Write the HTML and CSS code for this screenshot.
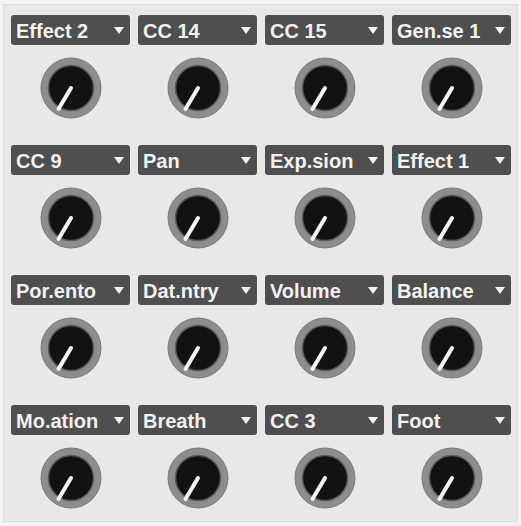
FILE: index.html
```html
<!DOCTYPE html>
<html>
<head>
<meta charset="utf-8">
<link rel="stylesheet" href="styles.css">
</head>
<body>
<svg width="0" height="0" class="defs">
  <defs>
    <g id="knob">
      <circle r="30" fill="#8d8d8d" stroke="#7a7a7a" stroke-width="1"/>
      <circle r="22.5" fill="#121212" stroke="#5a5a5a" stroke-width="1.5"/>
      <line x1="0" y1="0" x2="-12.5" y2="21" stroke="#f4f4f4" stroke-width="4" stroke-linecap="round"/>
    </g>
  </defs>
</svg>
<div class="panel">
  <div class="grid">
    <div class="cell"><div class="menu"><span class="label">Effect 2</span><span class="arrow"></span></div><svg class="knob" viewBox="-31 -31 62 62"><use href="#knob"/></svg></div>
    <div class="cell"><div class="menu"><span class="label">CC 14</span><span class="arrow"></span></div><svg class="knob" viewBox="-31 -31 62 62"><use href="#knob"/></svg></div>
    <div class="cell"><div class="menu"><span class="label">CC 15</span><span class="arrow"></span></div><svg class="knob" viewBox="-31 -31 62 62"><use href="#knob"/></svg></div>
    <div class="cell"><div class="menu"><span class="label">Gen.se 1</span><span class="arrow"></span></div><svg class="knob" viewBox="-31 -31 62 62"><use href="#knob"/></svg></div>

    <div class="cell"><div class="menu"><span class="label">CC 9</span><span class="arrow"></span></div><svg class="knob" viewBox="-31 -31 62 62"><use href="#knob"/></svg></div>
    <div class="cell"><div class="menu"><span class="label">Pan</span><span class="arrow"></span></div><svg class="knob" viewBox="-31 -31 62 62"><use href="#knob"/></svg></div>
    <div class="cell"><div class="menu"><span class="label">Exp.sion</span><span class="arrow"></span></div><svg class="knob" viewBox="-31 -31 62 62"><use href="#knob"/></svg></div>
    <div class="cell"><div class="menu"><span class="label">Effect 1</span><span class="arrow"></span></div><svg class="knob" viewBox="-31 -31 62 62"><use href="#knob"/></svg></div>

    <div class="cell"><div class="menu"><span class="label">Por.ento</span><span class="arrow"></span></div><svg class="knob" viewBox="-31 -31 62 62"><use href="#knob"/></svg></div>
    <div class="cell"><div class="menu"><span class="label">Dat.ntry</span><span class="arrow"></span></div><svg class="knob" viewBox="-31 -31 62 62"><use href="#knob"/></svg></div>
    <div class="cell"><div class="menu"><span class="label">Volume</span><span class="arrow"></span></div><svg class="knob" viewBox="-31 -31 62 62"><use href="#knob"/></svg></div>
    <div class="cell"><div class="menu"><span class="label">Balance</span><span class="arrow"></span></div><svg class="knob" viewBox="-31 -31 62 62"><use href="#knob"/></svg></div>

    <div class="cell"><div class="menu"><span class="label">Mo.ation</span><span class="arrow"></span></div><svg class="knob" viewBox="-31 -31 62 62"><use href="#knob"/></svg></div>
    <div class="cell"><div class="menu"><span class="label">Breath</span><span class="arrow"></span></div><svg class="knob" viewBox="-31 -31 62 62"><use href="#knob"/></svg></div>
    <div class="cell"><div class="menu"><span class="label">CC 3</span><span class="arrow"></span></div><svg class="knob" viewBox="-31 -31 62 62"><use href="#knob"/></svg></div>
    <div class="cell"><div class="menu"><span class="label">Foot</span><span class="arrow"></span></div><svg class="knob" viewBox="-31 -31 62 62"><use href="#knob"/></svg></div>
  </div>
</div>
</body>
</html>
```

FILE: styles.css
```css
html, body {
  margin: 0;
  padding: 0;
  background: #f3f3f3;
}
.defs {
  position: absolute;
  width: 0;
  height: 0;
}
.panel {
  box-sizing: border-box;
  width: 515px;
  height: 518px;
  margin: 4px 0 0 3px;
  background: #e8e8e8;
  border: 1px solid #dcdcdc;
  padding: 10px 0 0 7px;
}
.grid {
  display: grid;
  grid-template-columns: repeat(4, 119px);
  column-gap: 8px;
  row-gap: 26px;
  width: 500px;
}
.cell {
  display: flex;
  flex-direction: column;
  align-items: center;
  gap: 12px;
}
.menu {
  box-sizing: border-box;
  width: 100%;
  height: 30px;
  background: #4f4f4f;
  border-radius: 3px;
  display: flex;
  align-items: center;
  justify-content: space-between;
  padding: 2px 6px 0 5px;
}
.label {
  font-family: "Liberation Sans", Arial, sans-serif;
  font-weight: bold;
  font-size: 20px;
  line-height: 24px;
  color: #f2f2f2;
  white-space: nowrap;
}
.arrow {
  width: 0;
  height: 0;
  margin-top: -2px;
  border-left: 5.5px solid transparent;
  border-right: 5.5px solid transparent;
  border-top: 7px solid #f2f2f2;
}
.knob {
  display: block;
  width: 62px;
  height: 62px;
}
```
